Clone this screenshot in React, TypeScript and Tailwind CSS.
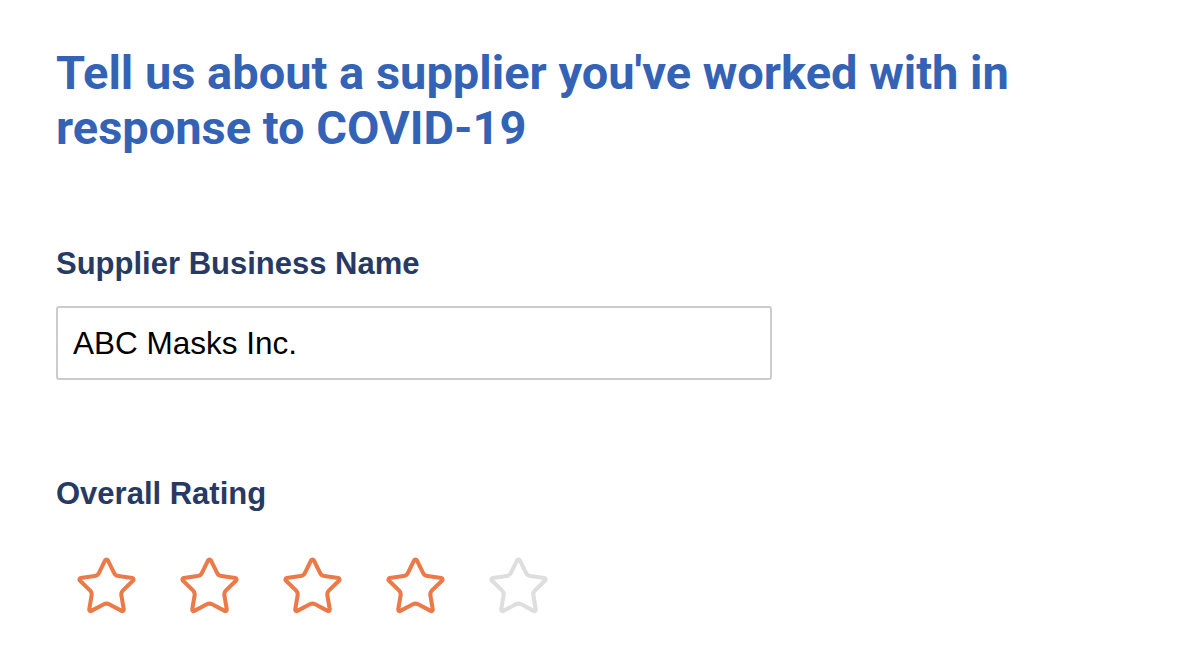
import { Star } from "lucide-react"

export default function App() {
    const rating = 4;

    return (
        <div className="min-h-[663px] w-full bg-white px-[56px] pt-[45px]">
            <h1 className="max-w-[1000px] font-['Roboto',sans-serif] text-[47px] font-bold leading-[55px] text-[#3463b6]">
                Tell us about a supplier you've worked with in response to COVID-19
            </h1>

            <label className="mt-[91px] block font-['Liberation_Sans',Arial,sans-serif] text-[31px] font-bold leading-[36px] text-[#283a63]">
                Supplier Business Name
            </label>
            <input
                type="text"
                defaultValue="ABC Masks Inc."
                className="mt-[24px] block h-[74px] w-[716px] rounded-[3px] border-2 border-[#cccccc] px-[15px] font-['Liberation_Sans',Arial,sans-serif] text-[31.5px] text-black outline-none"
            />

            <label className="mt-[96px] block font-['Liberation_Sans',Arial,sans-serif] text-[31px] font-bold leading-[36px] text-[#283a63]">
                Overall Rating
            </label>
            <div className="mt-[42px] flex gap-[38px] pl-[18px]">
                {[1, 2, 3, 4, 5].map(n => (
                    <Star
                        key={n}
                        size={65}
                        strokeWidth={1.5}
                        className={n <= rating ? "text-[#ec7a48]" : "text-[#dedede]"}
                    />
                ))}
            </div>
        </div>
    )
}
